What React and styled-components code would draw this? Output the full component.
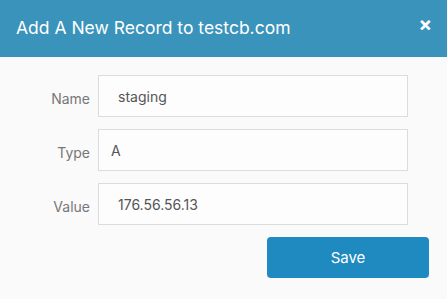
import React from 'react';
import styled, { createGlobalStyle } from 'styled-components';

const GlobalStyle = createGlobalStyle`
  html, body {
    margin: 0;
    padding: 0;
    background: #fafafa;
    font-family: Inter, "Noto Sans", sans-serif;
  }
`;

const fields = [
  { label: 'Name', value: 'staging', indent: 19 },
  { label: 'Type', value: 'A', indent: 12 },
  { label: 'Value', value: '176.56.56.13', indent: 19 },
];

export default () => (
  <Modal>
    <GlobalStyle />
    <Header>
      <Title>Add A New Record to testcb.com</Title>
      <Close aria-label="Close">&times;</Close>
    </Header>
    <Form>
      {fields.map(f => (
        <Row key={f.label}>
          <Label>{f.label}</Label>
          <Input defaultValue={f.value} $indent={f.indent} readOnly />
        </Row>
      ))}
      <Footer>
        <SaveButton type="button">Save</SaveButton>
      </Footer>
    </Form>
  </Modal>
);

const Modal = styled.div`
  width: 447px;
  height: 299px;
  background: #fafafa;
  overflow: hidden;
`;

const Header = styled.div`
  height: 57px;
  background: #3a93ba;
  display: flex;
  align-items: center;
  justify-content: space-between;
  padding: 0 15px 0 16px;
  box-sizing: border-box;
`;

const Title = styled.h2`
  margin: 0;
  color: #fff;
  font-size: 17.5px;
  font-weight: 400;
  padding-bottom: 3px;
`;

const Close = styled.button`
  border: none;
  background: none;
  color: #fff;
  font-family: Inter, sans-serif;
  font-size: 20px;
  font-weight: 700;
  line-height: 1;
  padding: 0 0 10px;
  cursor: pointer;
`;

const Form = styled.div`
  padding-top: 18px;
  display: flex;
  flex-direction: column;
  gap: 12px;
`;

const Row = styled.div`
  display: grid;
  grid-template-columns: 90px 310px;
  column-gap: 8px;
  align-items: center;
`;

const Label = styled.label`
  text-align: right;
  color: #777;
  font-size: 14px;
  padding-top: 5px;
`;

const Input = styled.input`
  height: 42px;
  box-sizing: border-box;
  border: 1px solid #dcdcdc;
  background: #fdfdfd;
  padding: 0 0 0 ${p => p.$indent}px;
  font-family: Inter, sans-serif;
  font-size: 14px;
  color: #555;
  outline: none;
`;

const Footer = styled.div`
  display: flex;
  justify-content: flex-end;
  padding-right: 18px;
`;

const SaveButton = styled.button`
  width: 162px;
  height: 41px;
  border: none;
  border-radius: 4px;
  background: #1f8abf;
  color: #fff;
  font-family: Inter, sans-serif;
  font-size: 15px;
  cursor: pointer;
`;
